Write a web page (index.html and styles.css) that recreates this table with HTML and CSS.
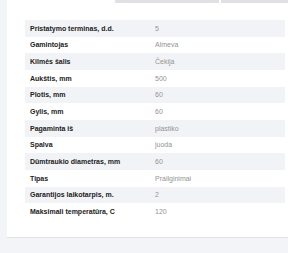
FILE: index.html
```html
<!DOCTYPE html>
<html lang="lt">
<head>
<meta charset="utf-8">
<title>Specifikacijos</title>
<link rel="stylesheet" href="styles.css">
</head>
<body>
<div class="card">
  <div class="tabs">
    <div class="tab tab-a"></div>
    <div class="tab tab-b"></div>
  </div>
  <table class="specs">
    <tbody>
      <tr><th>Pristatymo terminas, d.d.</th><td>5</td></tr>
      <tr><th>Gamintojas</th><td>Almeva</td></tr>
      <tr><th>Kilmės šalis</th><td>Čekija</td></tr>
      <tr><th>Aukštis, mm</th><td>500</td></tr>
      <tr><th>Plotis, mm</th><td>60</td></tr>
      <tr><th>Gylis, mm</th><td>60</td></tr>
      <tr><th>Pagaminta iš</th><td>plastiko</td></tr>
      <tr><th>Spalva</th><td>juoda</td></tr>
      <tr><th>Dūmtraukio diametras, mm</th><td>60</td></tr>
      <tr><th>Tipas</th><td>Prailginimai</td></tr>
      <tr><th>Garantijos laikotarpis, m.</th><td>2</td></tr>
      <tr><th>Maksimali temperatūra, C</th><td>120</td></tr>
    </tbody>
  </table>
</div>
</body>
</html>
```
FILE: styles.css
```css
html, body {
  margin: 0;
  padding: 0;
}
body {
  background: #f3f4f8;
  width: 288px;
  height: 253px;
  overflow: hidden;
  font-family: "Liberation Sans", Arial, sans-serif;
}
.card {
  margin-left: 7px;
  width: 281px;
  background: #ffffff;
  border-bottom: 1px solid #e3e4e8;
  padding: 0 3px 17px 18px;
  box-sizing: border-box;
}
.tabs {
  display: flex;
  gap: 2px;
  margin-left: 90px;
  margin-right: -3px;
  height: 3px;
  margin-bottom: 17px;
}
.tab {
  background: #dfe0e4;
  height: 3px;
}
.tab-a { width: 104px; }
.tab-b { flex: 1; }
.specs {
  border-collapse: collapse;
  width: 260px;
  font-size: 7px;
}
.specs tr {
  height: 16.67px;
}
.specs tr:nth-child(odd) {
  background: #f2f3f7;
}
.specs th {
  width: 120px;
  text-align: left;
  font-weight: bold;
  color: #222222;
  padding: 0 0 0 5px;
}
.specs td {
  color: #939393;
  padding: 0 0 0 5px;
}
```
